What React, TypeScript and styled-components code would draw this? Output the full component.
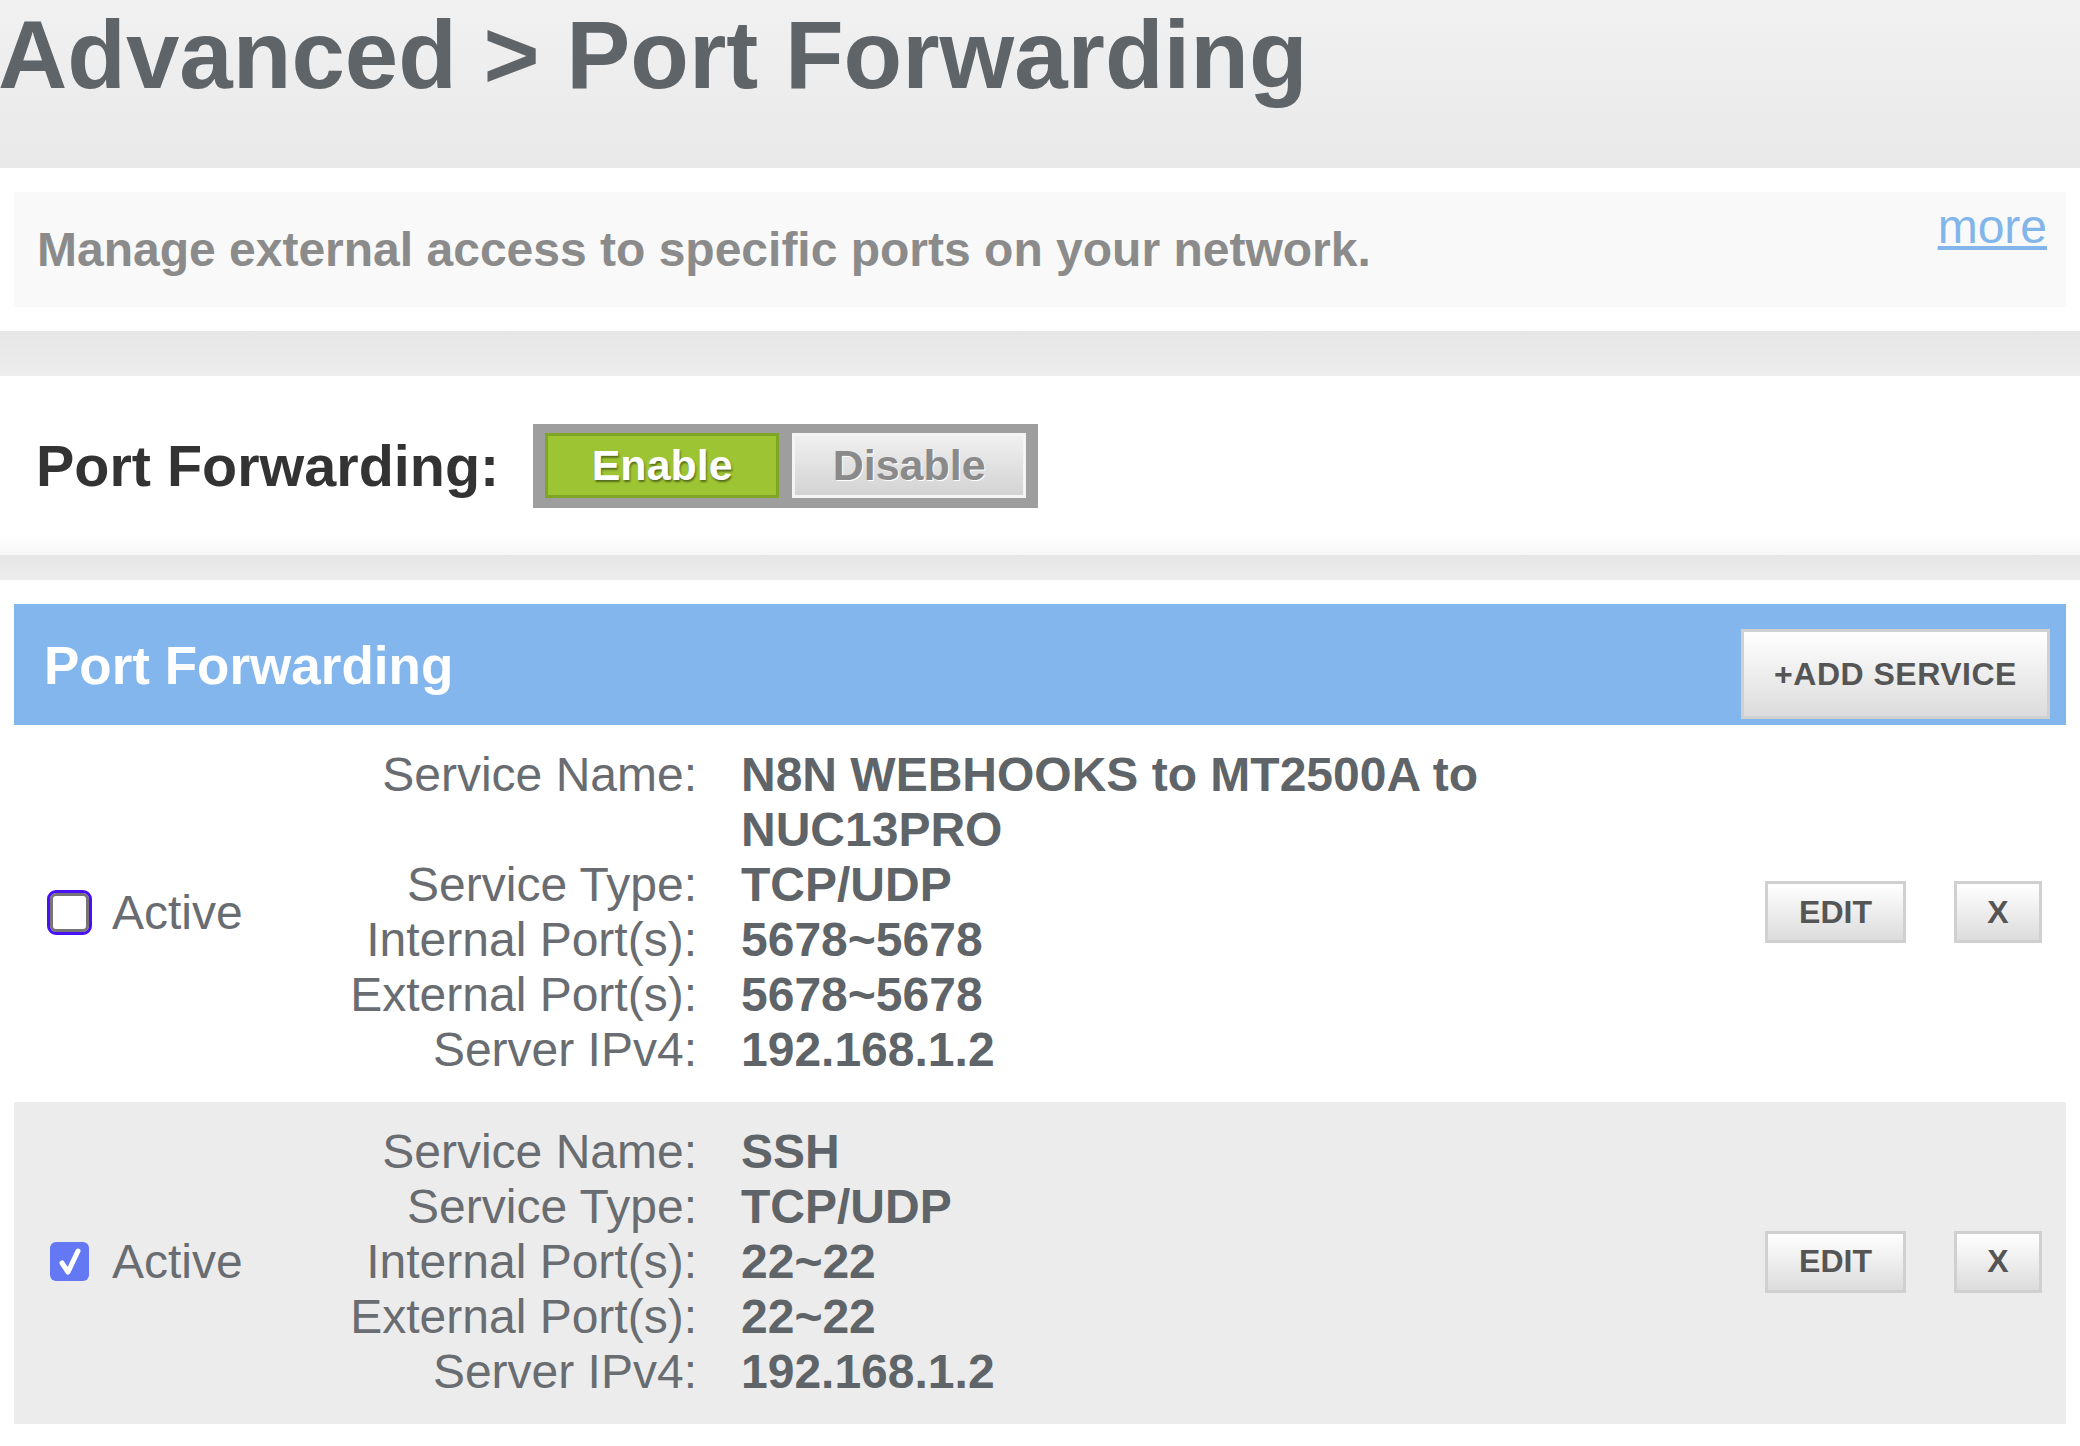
import styled, { createGlobalStyle } from "styled-components";

const GlobalStyle = createGlobalStyle`
  body {
    margin: 0;
    background: #ffffff;
    font-family: "Liberation Sans", Arial, sans-serif;
  }
`;

const Page = styled.div`
  width: 2080px;
  display: flex;
  flex-direction: column;
`;

const Header = styled.header`
  height: 168px;
  background: linear-gradient(#f1f1f1, #e9e9e9);
`;

const Title = styled.h1`
  margin: 0 0 0 -2px;
  font-size: 96px;
  font-weight: bold;
  color: #5f6468;
  line-height: normal;
  white-space: nowrap;
`;

const Card = styled.section`
  background: #ffffff;
  padding: 24px 14px;
`;

const Band = styled.div<{ $h: number }>`
  height: ${(p) => p.$h}px;
  background: linear-gradient(#e6e6e6, #ededed);
`;

const DescBox = styled.div`
  height: 115px;
  background: #f9f9f9;
  display: flex;
  justify-content: space-between;
  align-items: flex-start;
  padding: 0 19px 0 23px;
`;

const DescText = styled.p`
  margin: 0;
  padding-top: 30px;
  font-size: 48px;
  line-height: 55px;
  font-weight: bold;
  color: #8b8b8b;
`;

const More = styled.a`
  padding-top: 7px;
  font-size: 48px;
  line-height: 55px;
  color: #82b6ea;
  text-decoration: underline;
  cursor: pointer;
`;

const ToggleCard = styled.section`
  height: 179px;
  background: linear-gradient(#ffffff 88%, #f7f7f7);
  display: flex;
  align-items: center;
  padding-left: 36px;
  gap: 34px;
`;

const ToggleLabel = styled.span`
  font-size: 57.5px;
  font-weight: bold;
  color: #333333;
`;

const ToggleGroup = styled.div`
  display: flex;
  gap: 13px;
  padding: 9px 12px 10px;
  background: #9e9e9e;
`;

const ToggleButton = styled.button<{ $on?: boolean }>`
  width: 234px;
  height: 65px;
  font-family: inherit;
  font-size: 43px;
  font-weight: bold;
  cursor: pointer;
  border: 3px solid ${(p) => (p.$on ? "#7ea524" : "#f4f4f4")};
  background: ${(p) =>
    p.$on ? "#9dc432" : "linear-gradient(#f0f0f0, #d3d3d3)"};
  color: ${(p) => (p.$on ? "#ffffff" : "#8a8a8a")};
  text-shadow: ${(p) =>
    p.$on ? "1px 2px 2px rgba(0,0,0,0.45)" : "1px 1px 0 #ffffff"};
`;

const TableCard = styled.section`
  padding: 24px 14px 20px;
`;

const TableBar = styled.div`
  height: 121px;
  background: #82b6ec;
  display: flex;
  justify-content: space-between;
  align-items: flex-start;
  padding: 0 16px 0 30px;
`;

const BarTitle = styled.h2`
  margin: 0;
  padding-top: 31px;
  font-size: 53px;
  font-weight: bold;
  color: #ffffff;
  line-height: normal;
`;

const GreyButton = styled.button<{ $w: number; $h: number }>`
  width: ${(p) => p.$w}px;
  height: ${(p) => p.$h}px;
  border: 3px solid #d0d0d0;
  background: linear-gradient(#ffffff, #dcdcdc);
  font-family: inherit;
  font-size: 32px;
  font-weight: bold;
  color: #555555;
  cursor: pointer;
  padding: 0;
`;

const AddButton = styled(GreyButton)`
  margin-top: 25px;
  letter-spacing: 0.5px;
`;

const Row = styled.div<{ $shade?: boolean }>`
  display: flex;
  align-items: center;
  background: ${(p) => (p.$shade ? "#ececec" : "#ffffff")};
  padding: 22px 24px 25px 36px;
`;

const ActiveCell = styled.label`
  width: 210px;
  display: flex;
  align-items: center;
  gap: 23px;
  font-size: 48px;
  line-height: 55px;
  color: #696c70;
`;

const Box = styled.span<{ $checked?: boolean; $focus?: boolean }>`
  width: 39px;
  height: 39px;
  box-sizing: border-box;
  border-radius: 6px;
  display: flex;
  align-items: center;
  justify-content: center;
  border: ${(p) => (p.$checked ? "none" : "3px solid #767676")};
  background: ${(p) => (p.$checked ? "#6478f4" : "#ffffff")};
  outline: ${(p) => (p.$focus ? "3px solid #4a10f5" : "none")};
`;

const Details = styled.div`
  display: grid;
  grid-template-columns: 437px 800px;
  column-gap: 44px;
  font-size: 48px;
  line-height: 55px;
`;

const Label = styled.span`
  text-align: right;
  color: #696c70;
`;

const Value = styled.span`
  font-weight: bold;
  color: #5f6468;
`;

const Actions = styled.div`
  margin-left: auto;
  display: flex;
  gap: 48px;
`;

type Service = {
  name: string;
  type: string;
  internal: string;
  external: string;
  ip: string;
  active: boolean;
};

const services: Service[] = [
  {
    name: "N8N WEBHOOKS to MT2500A to NUC13PRO",
    type: "TCP/UDP",
    internal: "5678~5678",
    external: "5678~5678",
    ip: "192.168.1.2",
    active: false,
  },
  {
    name: "SSH",
    type: "TCP/UDP",
    internal: "22~22",
    external: "22~22",
    ip: "192.168.1.2",
    active: true,
  },
];

const ServiceRow = ({ s, shade }: { s: Service; shade: boolean }) => (
  <Row $shade={shade}>
    <ActiveCell>
      <Box $checked={s.active} $focus={!s.active}>
        {s.active && (
          <svg width="26" height="30" viewBox="0 0 26 30">
            <path
              d="M5 16 L11 25 L21 4"
              fill="none"
              stroke="#ffffff"
              strokeWidth="5"
              strokeLinecap="round"
              strokeLinejoin="round"
            />
          </svg>
        )}
      </Box>
      Active
    </ActiveCell>
    <Details>
      <Label>Service Name:</Label>
      <Value>{s.name}</Value>
      <Label>Service Type:</Label>
      <Value>{s.type}</Value>
      <Label>Internal Port(s):</Label>
      <Value>{s.internal}</Value>
      <Label>External Port(s):</Label>
      <Value>{s.external}</Value>
      <Label>Server IPv4:</Label>
      <Value>{s.ip}</Value>
    </Details>
    <Actions>
      <GreyButton $w={141} $h={62}>EDIT</GreyButton>
      <GreyButton $w={88} $h={62}>X</GreyButton>
    </Actions>
  </Row>
);

const App = () => (
  <Page>
    <GlobalStyle />
    <Header>
      <Title>Advanced &gt; Port Forwarding</Title>
    </Header>
    <Card>
      <DescBox>
        <DescText>Manage external access to specific ports on your network.</DescText>
        <More>more</More>
      </DescBox>
    </Card>
    <Band $h={45} />
    <ToggleCard>
      <ToggleLabel>Port Forwarding:</ToggleLabel>
      <ToggleGroup>
        <ToggleButton $on>Enable</ToggleButton>
        <ToggleButton>Disable</ToggleButton>
      </ToggleGroup>
    </ToggleCard>
    <Band $h={25} />
    <TableCard>
      <TableBar>
        <BarTitle>Port Forwarding</BarTitle>
        <AddButton $w={309} $h={90}>+ADD SERVICE</AddButton>
      </TableBar>
      {services.map((s, i) => (
        <ServiceRow key={s.name} s={s} shade={i % 2 === 1} />
      ))}
    </TableCard>
  </Page>
);

export default App;
